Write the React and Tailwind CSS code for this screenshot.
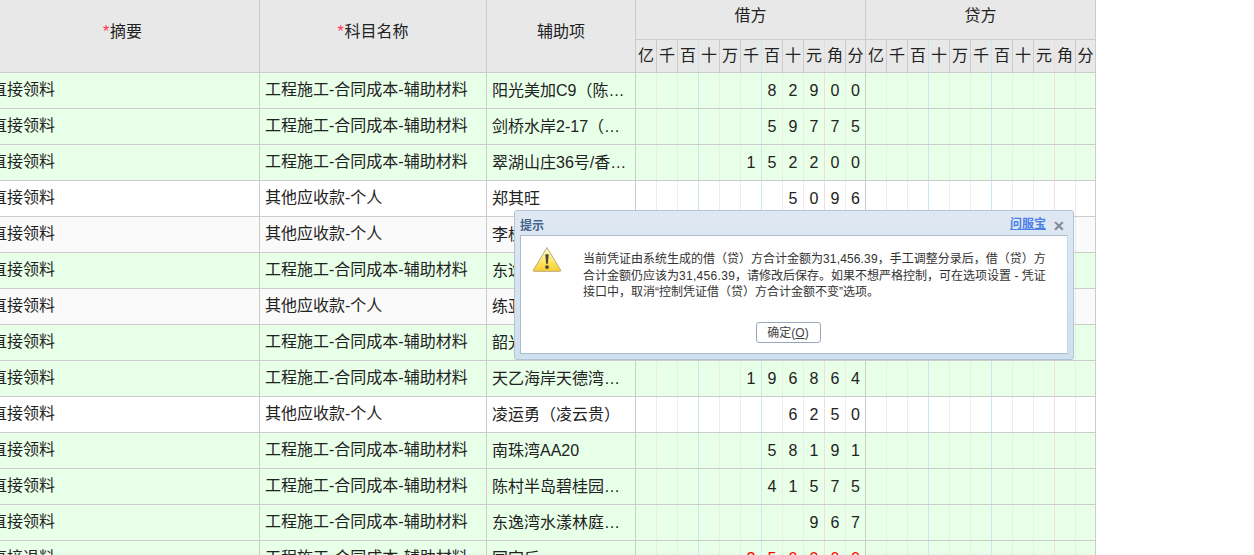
const font = { fontFamily: '"Liberation Sans", "Noto Sans CJK SC", sans-serif' };

const units = ["亿", "千", "百", "十", "万", "千", "百", "十", "元", "角", "分"];

const GREEN = "bg-[#e8ffe8]";
const WHITE = "bg-white";
const GREY = "bg-[#fafafa]";

const rows = [
  { a: "直接领料", b: "工程施工-合同成本-辅助材料", c: "阳光美加C9（陈村碧桂园）", d: "82900", bg: GREEN },
  { a: "直接领料", b: "工程施工-合同成本-辅助材料", c: "剑桥水岸2-17（陈村）", d: "59775", bg: GREEN },
  { a: "直接领料", b: "工程施工-合同成本-辅助材料", c: "翠湖山庄36号/香山路二期", d: "152200", bg: GREEN },
  { a: "直接领料", b: "其他应收款-个人", c: "郑其旺", d: "5096", bg: WHITE },
  { a: "直接领料", b: "其他应收款-个人", c: "李桂华", d: "", bg: GREY },
  { a: "直接领料", b: "工程施工-合同成本-辅助材料", c: "东逸湾水漾林庭", d: "", bg: GREEN },
  { a: "直接领料", b: "其他应收款-个人", c: "练亚军", d: "", bg: GREY },
  { a: "直接领料", b: "工程施工-合同成本-辅助材料", c: "韶光花园", d: "", bg: GREEN },
  { a: "直接领料", b: "工程施工-合同成本-辅助材料", c: "天乙海岸天德湾二期别墅", d: "196864", bg: GREEN },
  { a: "直接领料", b: "其他应收款-个人", c: "凌运勇（凌云贵）", d: "6250", bg: WHITE },
  { a: "直接领料", b: "工程施工-合同成本-辅助材料", c: "南珠湾AA20", d: "58191", bg: GREEN },
  { a: "直接领料", b: "工程施工-合同成本-辅助材料", c: "陈村半岛碧桂园南区别墅", d: "41575", bg: GREEN },
  { a: "直接领料", b: "工程施工-合同成本-辅助材料", c: "东逸湾水漾林庭二期别墅", d: "967", bg: GREEN },
  { a: "直接退料", b: "工程施工-合同成本-辅助材料", c: "国定后", d: "250000", bg: GREEN, red: true },
];

// separator colour of a money cell: blue every 3 digits, pink before 角, solid at the end
function bodySep(i) {
  if (i === 10) return "w-[20px] border-[#ccc]";
  if (i === 2 || i === 5) return "w-[21px] border-[#cbe6f3]";
  if (i === 8) return "w-[21px] border-[#f3dcdc]";
  return "w-[21px] border-[#ececec]";
}

function headSep(i) {
  if (i === 10) return "w-[20px] border-[#ccc]";
  if (i === 2 || i === 5) return "w-[21px] border-[#cbe6f3]";
  if (i === 8) return "w-[21px] border-[#eed8d8]";
  return "w-[21px] border-[#ccc]";
}

function MoneyHead({ title }) {
  return (
    <div className="flex h-[72px] w-[230px] flex-col">
      <div className="flex h-[40px] items-center justify-center border-r border-b border-[#ccc] pb-[8px]">
        {title}
      </div>
      <div className="flex h-[32px]">
        {units.map((u, i) => (
          <div key={i} className={`flex items-center justify-center border-r ${headSep(i)}`}>
            {u}
          </div>
        ))}
      </div>
    </div>
  );
}

function MoneyCells({ value, red }) {
  const digits = value.padStart(11, " ").split("");
  return (
    <div className="flex w-[230px]">
      {digits.map((d, i) => (
        <div
          key={i}
          className={`flex items-center justify-center border-r ${bodySep(i)} ${red ? "text-[#ff0000]" : ""}`}
        >
          {d.trim()}
        </div>
      ))}
    </div>
  );
}

function WarningIcon() {
  return (
    <svg width="30" height="27" viewBox="0 0 32 28">
      <defs>
        <linearGradient id="warn" x1="0" y1="0" x2="0" y2="1">
          <stop offset="0" stopColor="#fffbe0" />
          <stop offset="0.5" stopColor="#ffe96e" />
          <stop offset="1" stopColor="#f7cd30" />
        </linearGradient>
      </defs>
      <path
        d="M16 1.2 L30.6 25.4 Q31 26.6 29.8 26.6 L2.2 26.6 Q1 26.6 1.4 25.4 Z"
        fill="url(#warn)"
        stroke="#b8a47a"
        strokeWidth="1"
        strokeLinejoin="round"
      />
      <path d="M14.2 8.4 L17.8 8.4 L16.9 18.6 L15.1 18.6 Z" fill="#45453a" />
      <circle cx="16" cy="22" r="2" fill="#45453a" />
    </svg>
  );
}

function Dialog() {
  return (
    <div className="absolute top-[210px] left-[514px] flex h-[150px] w-[560px] flex-col rounded-[3px] border border-[#b3c4d4] bg-linear-to-b from-[#dfe8f2] to-[#cfe0ee] px-[5px] pb-[5px]">
      <div className="flex h-[24px] shrink-0 items-center justify-between pt-[5px] text-[12px] font-bold">
        <span className="text-[#46648c]">提示</span>
        <div className="flex items-center">
          <span className="mb-[4px] text-[#4a80e8] underline">问服宝</span>
          <span className="mr-[3px] ml-[7px] text-[14px] leading-none text-[#7a8796]">✕</span>
        </div>
      </div>
      <div className="flex flex-1 flex-col border border-[#a9bccf] border-r-[#b5dcf2] bg-white text-[12px] text-[#333]">
        <div className="flex flex-1 pt-[10px] pl-[11px]">
          <div className="w-[51px] shrink-0">
            <WarningIcon />
          </div>
          <div className="w-[470px] pt-[5px] leading-[16.5px]">
            <div>
              当前凭证由系统生成的借（贷）方合计金额为<span className="tracking-[0.15px]">31,456.39</span>
              ，手工调整分录后，借（贷）方
            </div>
            <div>
              合计金额仍应该为<span className="tracking-[0.3px]">31,456.39</span>
              ，请修改后保存。如果不想严格控制，可在选项设置 - 凭证
            </div>
            <div>接口中，取消“控制凭证借（贷）方合计金额不变”选项。</div>
          </div>
        </div>
        <div className="flex justify-center pb-[10px]">
          <button className="mr-[12px] h-[21px] w-[65px] rounded-[3px] border border-[#9aa7ba] bg-white text-[12px] text-[#444]">
            确定(<span className="underline">O</span>)
          </button>
        </div>
      </div>
    </div>
  );
}

export default function App() {
  return (
    <div className="relative h-[555px] w-full overflow-hidden bg-white text-[16px] text-[#222]" style={font}>
      <div className="ml-[-14px] flex w-[1110px] flex-col">
        <div className="flex h-[73px] border-b border-[#ccc] bg-[#e8e8e8]">
          <div className="flex w-[274px] items-center justify-center border-r border-[#ccc] pb-[9px]">
            <span className="mr-[1px] text-[#ff3355]">*</span>摘要
          </div>
          <div className="flex w-[227px] items-center justify-center border-r border-[#ccc] pb-[9px]">
            <span className="mr-[1px] text-[#ff3355]">*</span>科目名称
          </div>
          <div className="flex w-[149px] items-center justify-center border-r border-[#ccc] pb-[9px]">辅助项</div>
          <MoneyHead title="借方" />
          <MoneyHead title="贷方" />
        </div>
        {rows.map((r, i) => (
          <div key={i} className={`flex h-[36px] border-b border-[#ccc] ${r.bg}`}>
            <div className="flex w-[274px] items-center border-r border-[#ccc] px-[5px] pb-[1px]">{r.a}</div>
            <div className="flex w-[227px] items-center border-r border-[#ccc] px-[5px] pb-[1px]">{r.b}</div>
            <div className="w-[149px] truncate border-r border-[#ccc] px-[5px] leading-[35px]">{r.c}</div>
            <MoneyCells value={r.d} red={r.red} />
            <MoneyCells value="" />
          </div>
        ))}
      </div>
      <Dialog />
    </div>
  );
}
